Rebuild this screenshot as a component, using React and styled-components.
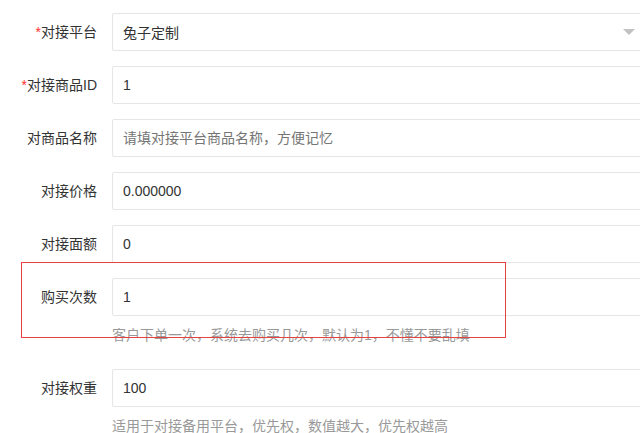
import React from 'react'
import styled, {createGlobalStyle} from 'styled-components'

const GlobalStyle = createGlobalStyle`
    html, body {
        margin: 0;
        padding: 0;
        background: #fff;
        overflow: hidden;
    }

    body {
        font-family: "Liberation Sans", "Noto Sans CJK SC", sans-serif;
        font-size: 14px;
        color: #333;
    }
`

const Page = styled.div`
    position: relative;
    width: 645px;
    padding-top: 13px;
`

const FormItem = styled.div`
    display: flex;
    flex-wrap: wrap;
    margin-bottom: 15px;
`

const Label = styled.label`
    width: 97px;
    padding: 9px 0;
    line-height: 20px;
    text-align: right;
    color: #333;
    white-space: nowrap;
`

const Required = styled.span`
    color: #ff2d2d;
`

const InputBlock = styled.div`
    position: relative;
    flex: 1;
    margin-left: 15px;
`

const Input = styled.input`
    display: block;
    box-sizing: border-box;
    width: 100%;
    height: 38px;
    padding-left: 10px;
    border: 1px solid #e6e6e6;
    border-radius: 2px;
    background: #fff;
    font: inherit;
    color: #333;
    outline: none;

    &::placeholder {
        color: #757575;
    }
`

const Caret = styled.i`
    position: absolute;
    right: 10px;
    top: 16px;
    width: 0;
    height: 0;
    border-style: solid;
    border-width: 6px 6px 0;
    border-color: #c2c2c2 transparent transparent;
`

const Aux = styled.div`
    width: 100%;
    padding: 9px 0 9px 112px;
    line-height: 20px;
    color: #999;
    margin-top: 0;
`

const Mark = styled.div`
    position: absolute;
    left: 21px;
    top: 262px;
    width: 483px;
    height: 74px;
    border: 1px solid #e94040;
    pointer-events: none;
`

const fields = [
    {label: '对接平台', required: true, value: '兔子定制', select: true},
    {label: '对接商品ID', required: true, value: '1'},
    {label: '对商品名称', placeholder: '请填对接平台商品名称，方便记忆'},
    {label: '对接价格', value: '0.000000'},
    {label: '对接面额', value: '0'},
    {label: '购买次数', value: '1', aux: '客户下单一次，系统去购买几次，默认为1，不懂不要乱填'},
    {label: '对接权重', value: '100', aux: '适用于对接备用平台，优先权，数值越大，优先权越高'},
]

export default function App() {
    return (
        <Page>
            <GlobalStyle/>
            {fields.map(f => (
                <FormItem key={f.label}>
                    <Label>
                        {f.required && <Required>*</Required>}
                        {f.label}
                    </Label>
                    <InputBlock>
                        <Input
                            readOnly
                            defaultValue={f.value}
                            placeholder={f.placeholder}
                        />
                        {f.select && <Caret/>}
                    </InputBlock>
                    {f.aux && <Aux>{f.aux}</Aux>}
                </FormItem>
            ))}
            <Mark/>
        </Page>
    )
}
